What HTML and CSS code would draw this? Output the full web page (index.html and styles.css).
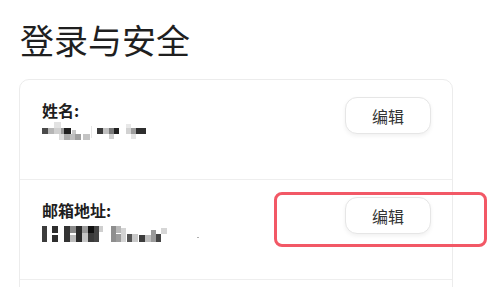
FILE: index.html
```html
<!DOCTYPE html>
<html lang="zh-CN">
<head>
<meta charset="utf-8">
<link rel="stylesheet" href="styles.css">
</head>
<body>
<div class="page">
  <h1 class="title">登录与安全</h1>
  <div class="card">
    <div class="row">
      <div class="info">
        <div class="label">姓名:</div>
        <svg class="mosaic" width="120" height="22" viewBox="0 0 120 22">
          <rect x="13" y="0" width="7" height="6" fill="#e2e2e2"/>
          <rect x="1" y="6" width="6" height="6" fill="#4a4a4a"/>
          <rect x="7" y="6" width="6" height="6" fill="#b5b5b5"/>
          <rect x="13" y="6" width="7" height="6" fill="#cfcfcf"/>
          <rect x="20" y="6" width="3" height="6" fill="#9a9a9a"/>
          <rect x="23" y="6" width="7" height="6" fill="#1e1e1e"/>
          <rect x="18" y="12" width="5" height="6" fill="#dcdcdc"/>
          <rect x="23" y="12" width="6" height="6" fill="#aaaaaa"/>
          <rect x="29" y="12" width="5" height="6" fill="#bdbdbd"/>
          <rect x="31" y="8" width="4" height="4" fill="#c8c8c8"/>
          <rect x="34" y="12" width="6" height="6" fill="#a0a0a0"/>
          <rect x="42" y="12" width="7" height="6" fill="#c4c4c4"/>
          <rect x="50" y="4" width="1" height="12" fill="#e6e6e6"/>
          <rect x="56" y="6" width="6" height="6" fill="#3a3a3a"/>
          <rect x="62" y="6" width="6" height="6" fill="#c0c0c0"/>
          <rect x="68" y="6" width="5" height="6" fill="#7a7a7a"/>
          <rect x="73" y="6" width="5" height="6" fill="#202020"/>
          <rect x="68" y="12" width="5" height="5" fill="#d0d0d0"/>
          <rect x="85" y="2" width="5" height="4" fill="#e8e8e8"/>
          <rect x="85" y="6" width="5" height="6" fill="#d2d2d2"/>
          <rect x="90" y="6" width="5" height="6" fill="#9d9d9d"/>
          <rect x="95" y="6" width="10" height="6" fill="#2e2e2e"/>
          <rect x="90" y="12" width="5" height="5" fill="#e4e4e4"/>
        </svg>
      </div>
      <button class="edit">编辑</button>
    </div>
    <div class="row">
      <div class="info">
        <div class="label">邮箱地址:</div>
        <svg class="mosaic" width="170" height="24" viewBox="0 0 170 24">
          <rect x="1" y="4" width="5" height="16" fill="#3c3c3c"/>
          <rect x="11" y="4" width="6" height="7" fill="#2e2e2e"/>
          <rect x="11" y="13" width="6" height="7" fill="#2e2e2e"/>
          <rect x="23" y="4" width="6" height="16" fill="#333"/>
          <rect x="29" y="4" width="6" height="7" fill="#8a8a8a"/>
          <rect x="29" y="13" width="6" height="7" fill="#bcbcbc"/>
          <rect x="35" y="4" width="6" height="16" fill="#2b2b2b"/>
          <rect x="41" y="4" width="6" height="7" fill="#9a9a9a"/>
          <rect x="41" y="11" width="6" height="9" fill="#c6c6c6"/>
          <rect x="47" y="4" width="6" height="7" fill="#111"/>
          <rect x="47" y="11" width="6" height="9" fill="#3a3a3a"/>
          <rect x="53" y="4" width="5" height="16" fill="#444"/>
          <rect x="58" y="4" width="4" height="6" fill="#cfcfcf"/>
          <rect x="70" y="4" width="5" height="16" fill="#8e8e8e"/>
          <rect x="75" y="4" width="5" height="7" fill="#b9b9b9"/>
          <rect x="75" y="12" width="5" height="8" fill="#9c9c9c"/>
          <rect x="80" y="6" width="5" height="14" fill="#d4d4d4"/>
          <rect x="86" y="12" width="5" height="8" fill="#555"/>
          <rect x="91" y="12" width="6" height="8" fill="#c8c8c8"/>
          <rect x="98" y="13" width="6" height="7" fill="#3c3c3c"/>
          <rect x="104" y="13" width="6" height="7" fill="#bdbdbd"/>
          <rect x="110" y="8" width="5" height="12" fill="#9a9a9a"/>
          <rect x="115" y="12" width="5" height="8" fill="#444"/>
          <rect x="120" y="6" width="6" height="6" fill="#d6d6d6"/>
          <rect x="156" y="15" width="2" height="1" fill="#b0b0b0"/>
        </svg>
      </div>
      <button class="edit">编辑</button>
      <div class="highlight"></div>
    </div>
    <div class="row row-empty"></div>
  </div>
</div>
</body>
</html>
```
FILE: styles.css
```css
html, body {
  margin: 0;
  padding: 0;
  background: #ffffff;
}
body {
  font-family: "Noto Sans CJK SC", "Noto Sans", "Liberation Sans", sans-serif;
  color: #222222;
  height: 287px;
  overflow: hidden;
}
.page {
  padding: 20px 0 0 19px;
  width: 434px;
}
.title {
  margin: 0 0 0 1px;
  font-size: 34px;
  font-weight: 400;
  line-height: 40px;
  height: 40px;
  color: #1f1f1f;
  letter-spacing: 0;
}
.card {
  margin-top: 19px;
  border: 1px solid #ececec;
  border-radius: 10px;
  background: #ffffff;
}
.row {
  position: relative;
  display: flex;
  justify-content: space-between;
  align-items: flex-start;
  height: 99px;
  border-bottom: 1px solid #eeeeee;
  padding: 0 21px 0 22px;
}
.info {
  display: flex;
  flex-direction: column;
  padding-top: 20px;
}
.label {
  font-size: 16px;
  line-height: 20px;
  font-weight: 700;
  color: #1e1e1e;
}
.mosaic {
  display: block;
  margin-top: 2px;
  margin-left: -1px;
  filter: blur(0.6px);
}
.edit {
  margin-top: 17px;
  width: 86px;
  height: 37px;
  border: 1px solid #e6e6e6;
  border-radius: 12px;
  background: #ffffff;
  box-shadow: 0 2px 4px rgba(0, 0, 0, 0.06);
  font-family: "Noto Sans CJK SC", "Noto Sans", sans-serif;
  font-size: 16px;
  color: #333333;
  padding: 0;
}
.highlight {
  position: absolute;
  left: 254px;
  top: 12px;
  width: 207px;
  height: 49px;
  border: 3px solid #f25866;
  border-radius: 8px;
  pointer-events: none;
}
.row-empty {
  border-bottom: none;
  height: 20px;
}
```
